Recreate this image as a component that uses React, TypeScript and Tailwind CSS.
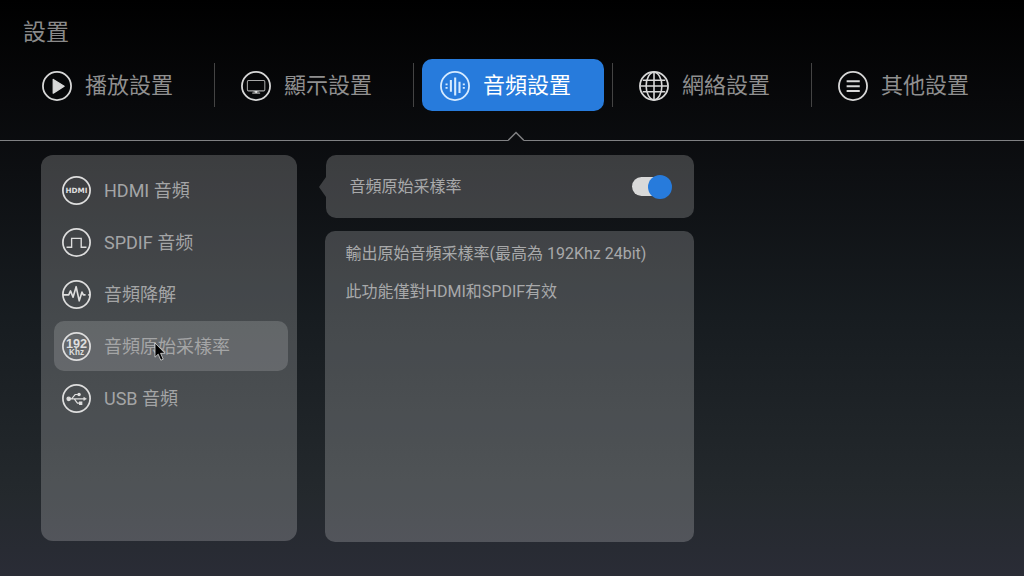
import type { ReactNode } from "react";
import clsx from "clsx";

type Entry = {
  id: string;
  label: string;
  icon: ReactNode;
};

const TABS: Entry[] = [
  {
    id: "playback",
    label: "播放設置",
    icon: <path d="M12 9v14.6l11.6-7.3z" fill="currentColor" strokeWidth="1.4" strokeLinejoin="round" />,
  },
  {
    id: "display",
    label: "顯示設置",
    icon: (
      <g strokeWidth="1.1" className="text-[#a8a8a8]">
        <rect x="6.8" y="10.2" width="18.6" height="11" rx="1.2" />
        <path d="M13.4 22h5.4M12 23.6h8.4" />
        <path d="M15.2 22.4h1.8" strokeWidth="1.8" className="text-white" />
      </g>
    ),
  },
  {
    id: "audio",
    label: "音頻設置",
    icon: (
      <path
        d="M16.2 6.8v19.4M11.6 9.6v12.4M20.8 11.4v12M7 13.2v2M7 17v2M25.4 13.2v2M25.4 17v2"
        strokeWidth="2.2"
      />
    ),
  },
  {
    id: "network",
    label: "網絡設置",
    icon: (
      <g strokeWidth="1.7">
        <ellipse cx="16" cy="16" rx="8.4" ry="14.6" />
        <path d="M16 1.7v28.6M1.7 16h28.6M4 9.8h24M4 22.2h24" />
      </g>
    ),
  },
  {
    id: "other",
    label: "其他設置",
    icon: <path d="M9.2 11h14M9.2 16.2h14M9.2 21.4h14" strokeWidth="2.2" />,
  },
];

const SOURCES: Entry[] = [
  {
    id: "hdmi",
    label: "HDMI 音頻",
    icon: (
      <text
        x="16"
        y="18.5"
        textAnchor="middle"
        fill="currentColor"
        stroke="none"
        className="font-['DejaVu_Sans',sans-serif] text-[8px] font-bold"
      >
        HDMI
      </text>
    ),
  },
  {
    id: "spdif",
    label: "SPDIF 音频",
    icon: <path d="M5 21.2h5.6V11.4h10.6v9.8H27" strokeWidth="1.5" />,
  },
  {
    id: "downmix",
    label: "音頻降解",
    icon: (
      <path
        d="M1 16.4h6.4l2-4.4 2.8 7 3.4-11.6 3.4 15.6 3-9.6 1.6 3H26M29 16.4H31"
        strokeWidth="1.8"
        strokeLinejoin="round"
      />
    ),
  },
  {
    id: "sample-rate",
    label: "音頻原始采樣率",
    icon: (
      <g
        fill="currentColor"
        stroke="none"
        textAnchor="middle"
        className="font-['Liberation_Sans',sans-serif] font-bold"
      >
        <text x="16" y="18" className="text-[14px]">
          192
        </text>
        <text x="16" y="25.4" className="text-[9px]">
          Khz
        </text>
      </g>
    ),
  },
  {
    id: "usb",
    label: "USB 音頻",
    icon: (
      <g strokeWidth="1.3">
        <path d="M7 16.4h18M10.5 16.4l4-4.8h3M13.5 16.4l3.5 4.8h2.5" />
        <circle cx="7.4" cy="16.4" r="1.9" fill="currentColor" />
        <circle cx="18.8" cy="11.6" r="1.3" fill="currentColor" />
        <path d="M19.4 20h2.4v2.4h-2.4z" fill="currentColor" />
        <path d="M24 14.6v3.6l3-1.8z" fill="currentColor" strokeWidth="0.6" />
      </g>
    ),
  },
];

function RoundIcon({ className, children }: { className: string; children: ReactNode }) {
  return (
    <svg
      viewBox="0 0 32 32"
      fill="none"
      stroke="currentColor"
      className={clsx("shrink-0", className)}
      aria-hidden="true"
    >
      <circle cx="16" cy="16" r="15" strokeWidth="1.9" />
      {children}
    </svg>
  );
}

function TabBar({ active }: { active: string }) {
  return (
    <nav className="mt-2 mr-[13px] ml-4 grid grid-cols-5">
      {TABS.map((tab, i) => (
        <div key={tab.id} className="flex items-center">
          <button
            type="button"
            aria-current={tab.id === active ? "page" : undefined}
            className={clsx(
              "mx-2 flex h-[52px] flex-1 items-center gap-[13px] rounded-[10px] pt-px pl-[18px] text-[22px] whitespace-nowrap",
              tab.id === active ? "bg-[#277bdc] text-white" : "text-[#8f8f8f]",
            )}
          >
            <RoundIcon
              className={clsx("size-[30px]", tab.id === active ? "text-[#d6ebff]" : "text-[#d8d8d8]")}
            >
              {tab.icon}
            </RoundIcon>
            {tab.label}
          </button>
          {i < TABS.length - 1 && <span className="h-11 w-px bg-[#444444]" />}
        </div>
      ))}
    </nav>
  );
}

/* Full-width rule with a notch under the active tab */
function Divider() {
  return (
    <div className="mt-5 flex items-end text-[#808183]">
      <span className="h-px w-2 shrink-0 bg-current" />
      <span className="h-px flex-1 bg-current" />
      <svg viewBox="0 0 16 10" fill="none" stroke="currentColor" className="h-2.5 w-4" aria-hidden="true">
        <path d="M0 9.5L8 1.5L16 9.5" strokeWidth="1.5" />
      </svg>
      <span className="h-px flex-1 bg-current" />
    </div>
  );
}

function Pointer() {
  return (
    <svg viewBox="0 0 12 20" className="absolute top-[21px] left-[100px] h-5 w-3" aria-hidden="true">
      <path
        d="M1 1v14.2l3.2-3 2.6 6 2.4-1-2.6-5.9H11z"
        fill="#000"
        stroke="#ddd"
        strokeWidth="0.8"
        strokeLinejoin="round"
      />
    </svg>
  );
}

function SourceList({ active }: { active: string }) {
  return (
    <aside className="mb-px w-[26%] shrink-0 rounded-xl bg-white/20 pt-2.5 pr-[9px] pl-[13px]">
      <ul className="space-y-0.5">
        {SOURCES.map((source) => (
          <li key={source.id} className="relative">
            <button
              type="button"
              aria-current={source.id === active ? "true" : undefined}
              className={clsx(
                "flex h-[50px] w-full items-center gap-[13px] rounded-[10px] pl-2 text-[18px] whitespace-nowrap text-[#a4a5a6]",
                source.id === active && "bg-white/16",
              )}
            >
              <RoundIcon className="size-[29px] text-[#dedede]">{source.icon}</RoundIcon>
              {source.label}
            </button>
            {source.id === active && <Pointer />}
          </li>
        ))}
      </ul>
    </aside>
  );
}

export default function App() {
  return (
    <div className="flex min-h-screen flex-col bg-[linear-gradient(to_bottom,#000_0%,#08090b_18%,#0d0f12_30%,#171c20_55%,#24292d_86%,#2a2c36_100%)] font-['Roboto','Noto_Sans_CJK_TC',sans-serif]">
      <h1 className="mt-[15px] ml-[23px] text-[23px] leading-9 text-[#8a8a8a]">設置</h1>
      <TabBar active="audio" />
      <Divider />

      <main className="mt-3.5 mb-[34px] ml-[41px] flex flex-1 gap-7">
        <SourceList active="sample-rate" />

        <section className="flex w-[37.6%] shrink-0 flex-col gap-[13px] text-[16px] text-[#a8a9aa]">
          <div className="relative ml-px flex h-[63px] items-center justify-between rounded-[10px] bg-white/20 pr-[22px] pl-6">
            <svg
              viewBox="0 0 7 20"
              className="absolute top-[22px] right-full h-5 w-[7px] fill-white/20"
              aria-hidden="true"
            >
              <path d="M7 0v20L0 10z" />
            </svg>
            <label htmlFor="raw-sample-rate">音頻原始采樣率</label>
            <input
              id="raw-sample-rate"
              type="checkbox"
              role="switch"
              defaultChecked
              className="relative h-6 w-10 appearance-none before:absolute before:top-0.5 before:left-0 before:h-[19px] before:w-9 before:rounded-full before:bg-[#d9d9d9] after:absolute after:top-0 after:left-0 after:size-6 after:rounded-full after:bg-[#8a8a8a] checked:after:left-4 checked:after:bg-[#277bdc]"
            />
          </div>

          <div className="flex-1 space-y-3.5 rounded-[10px] bg-white/20 px-[21px] pt-[11px]">
            <p>輸出原始音頻采樣率(最高為 192Khz 24bit)</p>
            <p>此功能僅對HDMI和SPDIF有效</p>
          </div>
        </section>
      </main>
    </div>
  );
}
